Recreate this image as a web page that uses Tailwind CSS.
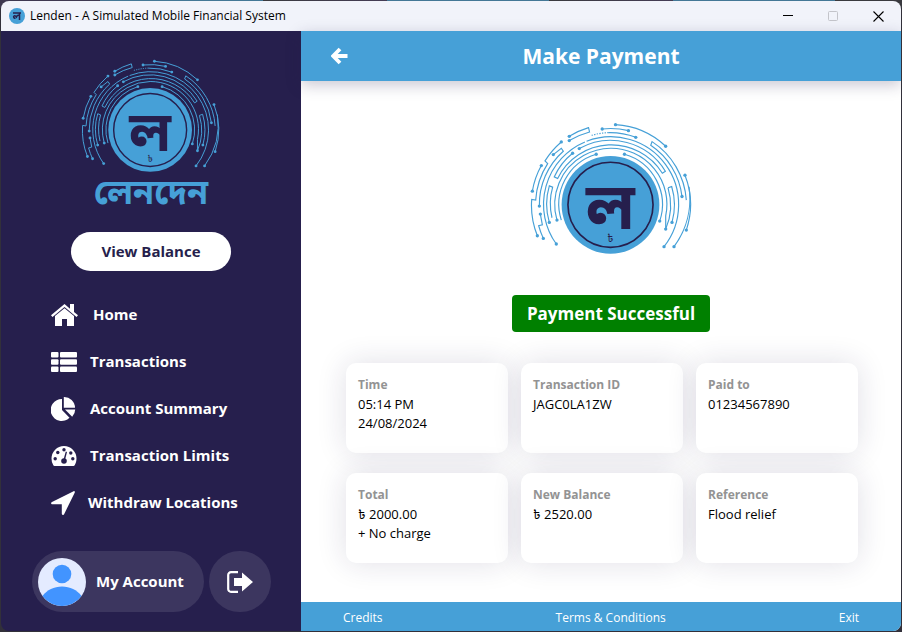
<!DOCTYPE html>
<html lang="en">
<head>
<meta charset="utf-8">
<title>Lenden - A Simulated Mobile Financial System</title>
<script src="https://cdn.jsdelivr.net/npm/@tailwindcss/browser@4"></script>
</head>
<body class="flex h-screen flex-col bg-[#32303a] bg-[linear-gradient(90deg,#3e3850_100px,#437796_100px,#437796_263px,#3a3a3f_263px,#443c55_387px,#437796_387px,#437796_549px,#3a3a3f_549px,#443c55_673px,#437796_673px,#437796_835px,#3a3a3f_835px)] bg-[length:100%_8px] bg-no-repeat p-px font-['Open_Sans','Noto_Sans','Noto_Sans_Bengali',sans-serif] text-black">
<svg class="hidden" aria-hidden="true">
  <symbol id="emblem" viewBox="30 30 490 400">
    <g fill="none" stroke="#46a0d7" stroke-width="3.500">
      <path d="M287 38A241 241 0 0 1 438 103"/>
      <path d="M247 51A229 229 0 0 1 326 56"/>
      <path d="M265 62A217 217 0 0 1 348 76"/>
      <path d="M215 70A217 217 0 0 1 265 62" stroke-dasharray="4 4"/>
      <path d="M496 190A241 241 0 0 1 500 355"/>
      <path d="M508 225A243 243 0 0 1 463 405"/>
      <path d="M487 254A216 216 0 0 0 393 100L397 89A228 228 0 0 1 500 265"/>
      <path d="M109 397A204 204 0 0 1 195 90M200 88A204 204 0 0 1 433 405"/>
      <path d="M178 110A193 193 0 0 1 437 178L428 184A180 180 0 0 0 113 200L103 195A190 190 0 0 1 158 124"/>
      <path d="M111 325A168 168 0 0 1 191 131A168 168 0 0 1 272 109A168 168 0 0 1 438 312V352"/>
      <path d="M314 127A157 157 0 0 1 420 328M229 127A157 157 0 0 0 124 325"/>
      <path d="M445 228L456 224A192 192 0 0 1 457 332M445 228A181 181 0 0 1 438 352"/>
      <path d="M88 332A192 192 0 0 1 88 222L98 226A181 181 0 0 0 96 318"/>
      <path d="M58 283A214 214 0 0 1 130 118L124 109L100 128"/>
      <path d="M70 380A228 228 0 0 1 56 342L67 339L61 307"/>
      <path d="M52 372A241 241 0 0 1 35 263L47 265A228 228 0 0 1 83 155L75 147A241 241 0 0 1 124 90"/>
      <path d="M64 161A241 241 0 0 0 37 238"/>
      <path d="M148 73A241 241 0 0 1 206 47L209 60A229 229 0 0 0 148 86"/>
    </g>
    <g fill="#46a0d7">
      <circle cx="287" cy="38" r="5"/><circle cx="438" cy="103" r="5"/><circle cx="247" cy="51" r="5"/><circle cx="326" cy="56" r="5"/><circle cx="348" cy="76" r="5"/><circle cx="496" cy="190" r="5"/><circle cx="500" cy="355" r="5"/><circle cx="487" cy="254" r="5"/><circle cx="463" cy="405" r="5"/><circle cx="433" cy="405" r="5"/><circle cx="438" cy="352" r="5"/><circle cx="457" cy="332" r="5"/><circle cx="420" cy="328" r="5"/><circle cx="314" cy="127" r="5"/><circle cx="229" cy="127" r="5"/><circle cx="178" cy="110" r="5"/><circle cx="158" cy="124" r="5"/><circle cx="111" cy="325" r="5"/><circle cx="88" cy="332" r="5"/><circle cx="58" cy="283" r="5"/><circle cx="100" cy="128" r="5"/><circle cx="124" cy="90" r="5"/><circle cx="64" cy="161" r="5"/><circle cx="37" cy="238" r="5"/><circle cx="61" cy="307" r="5"/><circle cx="70" cy="380" r="5"/><circle cx="52" cy="372" r="5"/><circle cx="109" cy="397" r="5"/><circle cx="148" cy="73" r="5"/><circle cx="148" cy="86" r="5"/>
      <circle cx="272" cy="279" r="147"/>
    </g>
    <circle cx="272" cy="279" r="128" fill="none" stroke="#261f4d" stroke-width="5"/>
    <text x="272" y="352" text-anchor="middle" font-size="194" font-weight="700" fill="#261f4d">ল</text>
    <text x="272" y="391" text-anchor="middle" font-size="32" font-weight="400" fill="#261f4d">৳</text>
  </symbol>
</svg>
<div class="flex flex-1 flex-col overflow-hidden rounded-lg">
  <div class="flex h-[30px] shrink-0 items-center bg-[#f1f3fa] pl-2">
    <svg class="size-4" viewBox="0 0 16 16" aria-hidden="true"><circle cx="8" cy="8" r="8" fill="#46a0d7"/><path d="M4 5h8M10.500 5v7M10.500 8c-2-2-3 1-3 1S6 7 5 8s0 2.500 1.500 2" fill="none" stroke="#261f4d" stroke-width="1.500"/></svg>
    <h1 class="ml-[5px] flex-1 text-[12px]">Lenden - A Simulated Mobile Financial System</h1>
    <button class="grid h-full w-[45px] place-items-center" aria-label="Minimize"><svg class="size-[10px]" viewBox="0 0 10 10"><path d="M0 4.500h10" stroke="#000"/></svg></button>
    <button class="grid h-full w-[45px] place-items-center" aria-label="Maximize" disabled><svg class="size-[10px]" viewBox="0 0 10 10"><rect x=".5" y=".5" width="9" height="9" rx="1" fill="none" stroke="#c3c4ca"/></svg></button>
    <button class="grid h-full w-[46px] place-items-center" aria-label="Close"><svg class="size-[11px]" viewBox="0 0 11 11"><path d="M.5.500l10 10M10.500.500l-10 10" stroke="#000" stroke-width="1.100"/></svg></button>
  </div>
  <div class="flex flex-1">
    <aside class="flex w-[300px] shrink-0 flex-col items-center bg-[#261f4d] pt-7 text-[15px] font-bold text-white">
      <svg class="h-[114px] w-[140px]" role="img" aria-label="Lenden emblem"><use href="#emblem"/></svg>
      <p class="h-[59px] text-[34px] leading-[36px] text-[#46a0d7]" lang="bn">লেনদেন</p>
      <button class="h-[39px] w-[160px] rounded-full bg-white text-[#261f4d]">View Balance</button>
      <nav class="mt-5 w-full pl-[50px]">
        <a href="#" class="flex h-[47px] items-center gap-[15px]">
          <svg class="h-[22px] w-[27px]" viewBox="0 0 27 22" fill="#fff" aria-hidden="true"><path d="M13.500 0L0 11.300l1.500 1.700 12-10 12 10 1.500-1.700-4-3.400V0h-4v4.700z"/><path d="M13.500 4.200L4 12.100V22h7v-7h5v7h7v-9.900z"/></svg>Home</a>
        <a href="#" class="flex h-[47px] items-center gap-[13px]">
          <svg class="h-5 w-[26px]" viewBox="0 0 26 20" fill="#fff" aria-hidden="true"><rect width="7.500" height="5.500" rx="1"/><rect x="9" width="17" height="5.500" rx="1"/><rect y="7.250" width="7.500" height="5.500" rx="1"/><rect x="9" y="7.250" width="17" height="5.500" rx="1"/><rect y="14.500" width="7.500" height="5.500" rx="1"/><rect x="9" y="14.500" width="17" height="5.500" rx="1"/></svg>Transactions</a>
        <a href="#" class="flex h-[47px] items-center gap-[13px]">
          <svg class="h-[24px] w-[26px]" viewBox="0 0 26 24" fill="#fff" aria-hidden="true"><path d="M11 2v11l7.500 7.700A11 11 0 1 1 11 2z"/><path d="M12.800 0A11 11 0 0 1 24 10.800H12.800z"/><path d="M14 12.500h10.200a11 11 0 0 1-3 7.300z"/></svg>Account Summary</a>
        <a href="#" class="flex h-[47px] items-center gap-[13px]">
          <svg class="h-5 w-[26px]" viewBox="0 0 26 20" aria-hidden="true"><path d="M13 0a12.500 12.500 0 0 1 12.500 12.500c0 2.500-.6 4.700-1.700 6.600-.4.600-.7.900-1.300.9h-19c-.6 0-1-.3-1.300-.9A13 13 0 0 1 .5 12.500 12.500 12.500 0 0 1 13 0z" fill="#fff"/><g fill="#261f4d"><circle cx="13" cy="3.700" r="1.700"/><circle cx="6.800" cy="6.500" r="1.700"/><circle cx="4.200" cy="12.700" r="1.700"/><circle cx="21.800" cy="12.700" r="1.700"/><circle cx="19.800" cy="7" r="1.700"/><circle cx="13" cy="15" r="2.800"/><path d="M14.800 5.500l1.200.400-2 8h-1.600z"/></g></svg>Transaction Limits</a>
        <a href="#" class="flex h-[47px] items-center gap-[13px]">
          <svg class="size-6" viewBox="0 0 24 24" fill="#fff" aria-hidden="true"><path d="M22.600.2L1 11.100c-1.500.8-1 2.200.5 2.200h9.300v9.300c0 1.600 1.700 1.900 2.300.6L23.800 1.500C24 .5 23.500-.1 22.600.2z"/></svg>Withdraw Locations</a>
      </nav>
      <div class="mt-auto flex w-full gap-[5px] pb-[19px] pl-[31px]">
        <button class="flex h-[61px] w-[172px] items-center gap-[10px] rounded-full bg-[#3c365f] pl-[6px]">
          <svg class="size-12" viewBox="0 0 48 48" aria-hidden="true"><circle cx="24" cy="24" r="24" fill="#e4ebff"/><circle cx="24" cy="16" r="9.300" fill="#4294ff"/><path d="M4.500 38C9 32 16 28.500 24 28.500S39 32 43.500 38A24 24 0 0 1 4.500 38z" fill="#4294ff"/></svg>My Account</button>
        <button class="grid h-[61px] w-[62px] place-items-center rounded-full bg-[#3c365f]" aria-label="Log out"><svg class="h-[22px] w-[26px]" viewBox="0 0 26 22"><path d="M11 1.200H4A2.800 2.800 0 0 0 1.200 4v14A2.800 2.800 0 0 0 4 20.800h7" fill="none" stroke="#fff" stroke-width="2.200"/><path d="M7 7h8V1.500L26 11 15 20.500V15H7z" fill="#fff"/></svg></button>
      </div>
    </aside>
    <div class="flex flex-1 flex-col bg-white">
      <header class="grid h-[50px] grid-cols-[60px_1fr_40px] items-center bg-[#46a0d7] pl-[30px] pr-[50px] text-white shadow-[0_4px_14px_rgba(38,31,77,0.25)]">
        <button aria-label="Back"><svg class="h-[18px] w-[17px]" viewBox="0 0 17 18"><path d="M9 2L2.200 9 9 16M3 9h13.500" fill="none" stroke="#fff" stroke-width="3.800"/></svg></button>
        <h2 class="pt-[2px] text-center text-[21px] font-bold">Make Payment</h2>
      </header>
      <main class="flex-1 pl-[45px] pr-[43px] pt-[41px]">
        <div class="flex flex-col items-center pl-[18px]">
          <svg class="h-[133px] w-[163px]" role="img" aria-label="Lenden emblem"><use href="#emblem"/></svg>
          <p class="mt-10 rounded-[4px] bg-[#008000] px-[15px] text-[17px] leading-[37px] font-bold text-white" role="status">Payment Successful</p>
        </div>
        <dl class="mt-[31px] grid grid-cols-3 gap-x-[13px] gap-y-5 text-[13px] leading-[19px]">
          <div class="h-[90px] rounded-[10px] bg-white p-3 shadow-[0_0_30px_rgba(38,31,77,0.14)]"><dt class="text-[12px] leading-5 font-bold text-[#939393]">Time</dt><dd>05:14 PM<br>24/08/2024</dd></div>
          <div class="h-[90px] rounded-[10px] bg-white p-3 shadow-[0_0_30px_rgba(38,31,77,0.14)]"><dt class="text-[12px] leading-5 font-bold text-[#939393]">Transaction ID</dt><dd>JAGC0LA1ZW</dd></div>
          <div class="h-[90px] rounded-[10px] bg-white p-3 shadow-[0_0_30px_rgba(38,31,77,0.14)]"><dt class="text-[12px] leading-5 font-bold text-[#939393]">Paid to</dt><dd>01234567890</dd></div>
          <div class="h-[90px] rounded-[10px] bg-white p-3 shadow-[0_0_30px_rgba(38,31,77,0.14)]"><dt class="text-[12px] leading-5 font-bold text-[#939393]">Total</dt><dd>৳ 2000.00<br>+ No charge</dd></div>
          <div class="h-[90px] rounded-[10px] bg-white p-3 shadow-[0_0_30px_rgba(38,31,77,0.14)]"><dt class="text-[12px] leading-5 font-bold text-[#939393]">New Balance</dt><dd>৳ 2520.00</dd></div>
          <div class="h-[90px] rounded-[10px] bg-white p-3 shadow-[0_0_30px_rgba(38,31,77,0.14)]"><dt class="text-[12px] leading-5 font-bold text-[#939393]">Reference</dt><dd>Flood relief</dd></div>
        </dl>
      </main>
      <footer class="flex h-[29px] items-center justify-between bg-[#46a0d7] px-[42px] pt-[2px] text-[12px] text-white">
        <a href="#">Credits</a><a href="#">Terms &amp; Conditions</a><a href="#">Exit</a>
      </footer>
    </div>
  </div>
</div>
</body>
</html>
